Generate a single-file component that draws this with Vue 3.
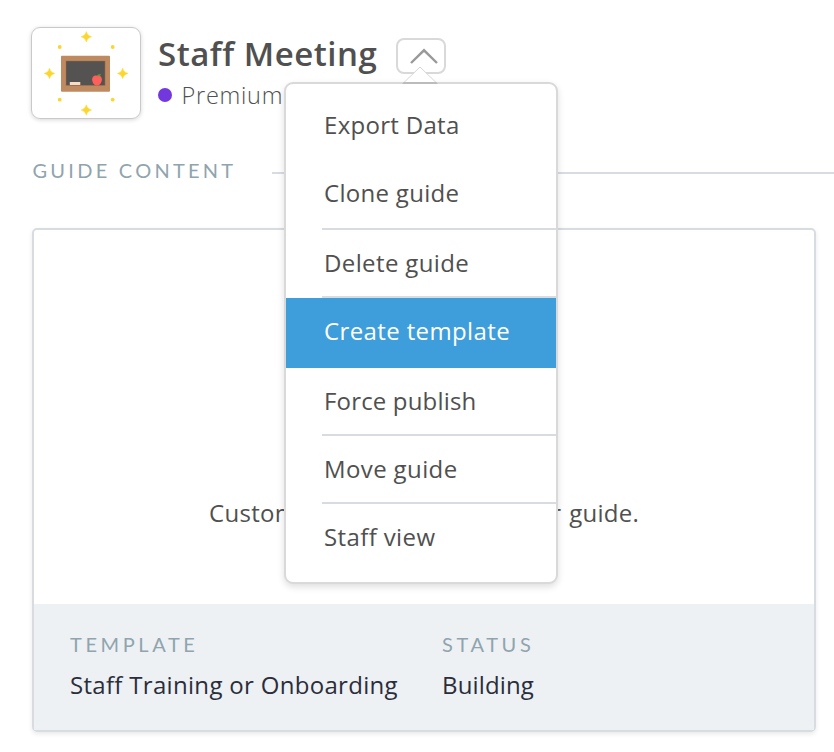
<template>
  <div class="page">
    <header class="header">
      <div class="thumb">
        <svg viewBox="32 28 108 90" width="108" height="90">
          <path
            v-for="(star, index) in stars"
            :key="index"
            :transform="`translate(${star[0]} ${star[1]})`"
            d="M0 -5.2Q0.9 -0.9 5.2 0Q0.9 0.9 0 5.2Q-0.9 0.9 -5.2 0Q-0.9 -0.9 0 -5.2Z"
            fill="#fbd62c"
            stroke="#fbd62c"
            stroke-width="0.5"
          />
          <circle v-for="(dot, index) in dots" :key="'d' + index" :cx="dot[0]" :cy="dot[1]" r="1.9" fill="#fbd62c" />
          <rect x="61" y="55.7" width="49" height="36.1" rx="1" fill="#c08a60" />
          <rect x="65.7" y="60.7" width="39.8" height="25" fill="#a9744f" />
          <rect x="66.2" y="61.2" width="38.6" height="24" fill="#545351" />
          <rect x="69.8" y="82" width="10.5" height="3" rx="0.5" fill="#f7dcc8" />
          <path d="M97 75.8C99.5 74.8 102 76.6 101.9 79.6C101.7 82.8 99.8 85.6 97 85.6C94.2 85.6 92.3 82.8 92.1 79.6C92 76.6 94.5 74.8 97 75.8Z" fill="#ff5f5c" />
          <path d="M97 76.2Q97 74.2 101 74.1Q100.6 77 97 76.2Z" fill="#5f9b2f" />
        </svg>
      </div>
      <div class="heading">
        <div class="title-row">
          <h1 class="title">Staff Meeting</h1>
          <div class="dropdown">
            <button class="toggle" type="button">
              <svg viewBox="0 0 46 32" width="46" height="32">
                <path d="M13 23L26 10.3L39 23" fill="none" stroke="#999" stroke-width="2.4" />
              </svg>
            </button>
            <ul class="menu">
              <svg class="caret" viewBox="0 0 36 18" width="36" height="18">
                <path d="M1 18L18 1L35 18Z" fill="#fff" />
                <path d="M1 17.4L18 1L35 17.4" fill="none" stroke="#d6d6d6" stroke-width="1" />
                <path d="M1.6 16H34.4L36 18H0Z" fill="#bcbcbc" />
              </svg>
              <li
                v-for="item in items"
                :key="item.label"
                class="item"
                :class="{ item_active: item.active, item_line: item.line, item_tall: item.tall }"
              >
                <span :class="item.name">{{ item.label }}</span>
              </li>
            </ul>
          </div>
        </div>
        <div class="plan"><i class="plan-dot"></i><span>Premium</span></div>
      </div>
    </header>

    <div class="section">
      <h2 class="label section-label">GUIDE CONTENT</h2>
      <span class="rule"></span>
    </div>

    <section class="card">
      <div class="card-body">
        <p class="message">Customize the content of your guide.</p>
      </div>
      <footer class="card-footer">
        <div class="meta">
          <div class="label">TEMPLATE</div>
          <div class="value">Staff Training or Onboarding</div>
        </div>
        <div class="meta">
          <div class="label">STATUS</div>
          <div class="value value_status">Building</div>
        </div>
      </footer>
    </section>
  </div>
</template>

<script setup>
const items = [
  { label: 'Export Data', name: 'export' },
  { label: 'Clone guide', name: 'clone', line: true, tall: true },
  { label: 'Delete guide', name: 'delete', line: true },
  { label: 'Create template', name: 'create', active: true, tall: true },
  { label: 'Force publish', name: 'force', line: true },
  { label: 'Move guide', name: 'move', line: true },
  { label: 'Staff view', name: 'staff' }
]

const stars = [[86.3, 36.8], [49.5, 73.4], [122.7, 73.4], [86.3, 110]]
const dots = [[59.7, 47], [112.7, 47], [59.7, 99.7], [112.7, 99.7]]
</script>

<style>
body {
  background: #fff;
}
</style>

<style scoped>
.page {
  box-sizing: border-box;
  width: 834px;
  height: 752px;
  padding: 27px 0 0 31px;
  overflow: hidden;
  font-family: "Open Sans", "Noto Sans", sans-serif;
  color: #505050;
  white-space: nowrap;
}

h1,
h2,
p,
ul {
  margin: 0;
  padding: 0;
}

.header {
  display: flex;
  height: 92px;
}

.thumb {
  box-sizing: border-box;
  width: 110px;
  height: 92px;
  border: 1px solid #c9c9c9;
  border-radius: 9px;
  box-shadow: 0 1px 4px rgba(0, 0, 0, 0.16);
}

.thumb svg,
.toggle svg {
  display: block;
}

.heading {
  margin-left: 17px;
}

.title-row {
  display: flex;
  height: 54px;
}

.title {
  width: 238px;
  font-size: 33px;
  line-height: 53px;
  font-weight: 600;
  letter-spacing: 0.5px;
}

.dropdown {
  position: relative;
  width: 50px;
  height: 36px;
  margin-top: 11px;
}

.toggle {
  box-sizing: border-box;
  display: block;
  width: 50px;
  height: 36px;
  padding: 0;
  border: 2px solid #d9d9d9;
  border-radius: 8px;
  background: #fff;
}

.menu {
  position: absolute;
  z-index: 2;
  top: 44px;
  left: -112px;
  box-sizing: border-box;
  width: 274px;
  height: 502px;
  padding-top: 8px;
  border: 2px solid #d9d9d9;
  border-radius: 9px;
  background: #fff;
  box-shadow: 0 3px 7px rgba(0, 0, 0, 0.13);
  list-style: none;
}

.caret {
  position: absolute;
  top: -18px;
  left: 116px;
}

.item {
  box-sizing: border-box;
  height: 68px;
  padding-left: 38px;
  font-size: 24px;
  line-height: 66px;
  letter-spacing: 0.3px;
  position: relative;
}

.item_tall {
  height: 70px;
}

.item_line::after {
  content: "";
  position: absolute;
  right: 0;
  bottom: 0;
  left: 36px;
  height: 2px;
  background: #d8dce0;
}

.item_active {
  background: #3e9ddb;
  color: #fff;
}

.delete,
.create,
.staff,
.move {
  letter-spacing: 0.38px;
}

.force {
  letter-spacing: 0.17px;
}

.plan {
  display: flex;
  align-items: center;
  height: 28px;
  font-size: 23.5px;
  font-weight: 300;
  letter-spacing: 0.75px;
}

.plan-dot {
  width: 14px;
  height: 14px;
  margin-right: 9.5px;
  border-radius: 50%;
  background: #7338dd;
}

.label {
  font-family: Lato, sans-serif;
  font-size: 20px;
  font-weight: 400;
  line-height: 24px;
  color: #90a4ae;
  letter-spacing: 3.6px;
}

.section {
  display: flex;
  margin: 39px 0 0 1.5px;
  height: 70px;
}

.section-label {
  width: 239.5px;
  letter-spacing: 3.25px;
}

.rule {
  flex: 1;
  height: 2px;
  margin-top: 14px;
  background: #d8dce0;
}

.card {
  box-sizing: border-box;
  width: 784px;
  height: 504px;
  margin-left: 1px;
  border: 2px solid #d8dce0;
  border-radius: 5px;
  box-shadow: 0 2px 5px rgba(0, 0, 0, 0.09);
}

.card-body {
  height: 374px;
}

.message {
  padding: 266px 0 0 175px;
  font-size: 24px;
  line-height: 34px;
  letter-spacing: 0.3px;
  word-spacing: 1.3px;
}

.card-footer {
  display: grid;
  grid-template-columns: 372px 1fr;
  box-sizing: border-box;
  height: 126px;
  padding: 28px 0 0 36px;
  background: #edf1f4;
}

.value {
  margin-top: 12px;
  font-size: 24px;
  line-height: 34px;
  letter-spacing: 0.31px;
  color: #2b2d3a;
}

.value_status {
  letter-spacing: 0.15px;
}
</style>
